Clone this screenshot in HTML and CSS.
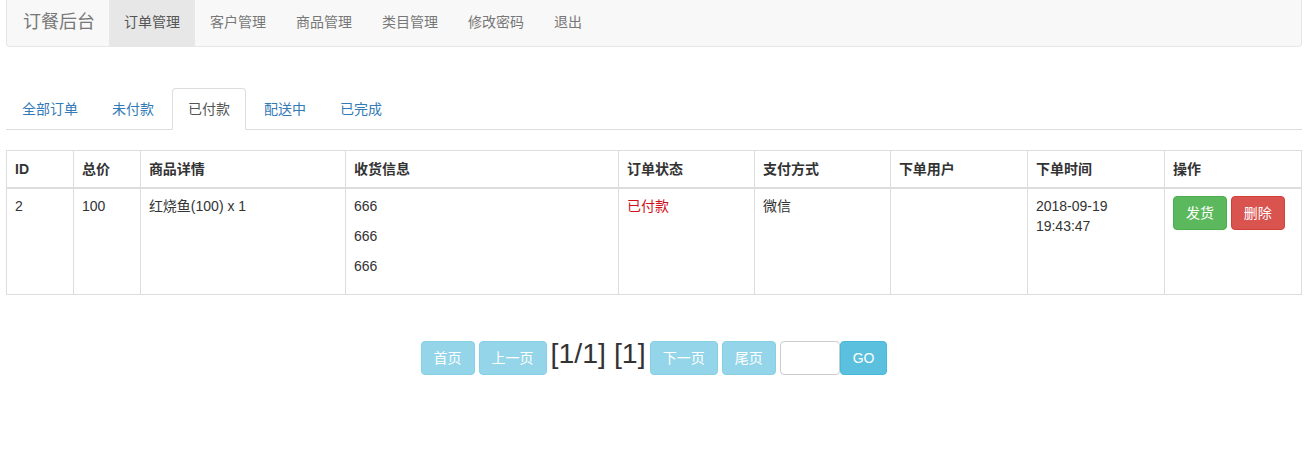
FILE: index.html
```html
<!DOCTYPE html>
<html lang="zh-CN">
<head>
    <meta charset="UTF-8">
    <meta name="viewport" content="width=device-width, initial-scale=1.0">
    <title>订餐后台</title>
    <link rel="stylesheet" href="styles.css">
</head>
<body>
    <nav class="navbar">
        <a class="navbar-brand" href="#">订餐后台</a>
        <ul class="navbar-nav">
            <li class="active"><a href="#">订单管理</a></li>
            <li><a href="#">客户管理</a></li>
            <li><a href="#">商品管理</a></li>
            <li><a href="#">类目管理</a></li>
            <li><a href="#">修改密码</a></li>
            <li><a href="#">退出</a></li>
        </ul>
    </nav>

    <ul class="nav-tabs">
        <li><a href="#">全部订单</a></li>
        <li><a href="#">未付款</a></li>
        <li class="active"><a href="#">已付款</a></li>
        <li><a href="#">配送中</a></li>
        <li><a href="#">已完成</a></li>
    </ul>

    <table class="order-table">
        <colgroup>
            <col class="col-sm">
            <col class="col-sm">
            <col class="col-md">
            <col class="col-lg">
            <col class="col-x">
            <col class="col-x">
            <col class="col-y">
            <col class="col-y">
            <col class="col-y">
        </colgroup>
        <thead>
            <tr>
                <th>ID</th>
                <th>总价</th>
                <th>商品详情</th>
                <th>收货信息</th>
                <th>订单状态</th>
                <th>支付方式</th>
                <th>下单用户</th>
                <th>下单时间</th>
                <th>操作</th>
            </tr>
        </thead>
        <tbody>
            <tr>
                <td>2</td>
                <td>100</td>
                <td>红烧鱼(100) x 1</td>
                <td>
                    <p>666</p>
                    <p>666</p>
                    <p>666</p>
                </td>
                <td class="status-paid">已付款</td>
                <td>微信</td>
                <td></td>
                <td>2018-09-19 19:43:47</td>
                <td class="actions">
                    <button class="btn btn-success">发货</button>
                    <button class="btn btn-danger">删除</button>
                </td>
            </tr>
        </tbody>
    </table>

    <div class="pager">
        <button class="btn btn-info" disabled>首页</button>
        <button class="btn btn-info" disabled>上一页</button>
        <span class="page-info">[1/1] [1]</span>
        <button class="btn btn-info" disabled>下一页</button>
        <button class="btn btn-info" disabled>尾页</button>
        <span class="jump">
            <input type="text" class="page-input">
            <button class="btn btn-info">GO</button>
        </span>
    </div>
</body>
</html>
```

FILE: styles.css
```css
/* page */
body {
    margin: 0;
    padding: 0 8px 0 6px;
    font-family: "Liberation Sans", "Noto Sans CJK SC", sans-serif;
    font-size: 14px;
    line-height: 20px;
    color: #333333;
    background-color: #FFFFFF;
}

a {
    text-decoration: none;
}

ul {
    list-style: none;
    margin: 0;
    padding: 0;
}

/* top navbar */
.navbar {
    display: flex;
    height: 46px;
    background-color: #F8F8F8;
    border: 1px solid #E7E7E7;
    border-top: none;
    border-radius: 0 0 4px 4px;
}

.navbar-brand {
    padding: 12px 14px 14px 16px;
    font-size: 18px;
    color: #777777;
}

.navbar-nav {
    display: flex;
}

.navbar-nav a {
    display: block;
    padding: 12px 15px 14px;
    color: #777777;
}

.navbar-nav .active a {
    background-color: #E7E7E7;
    color: #555555;
}

/* status tabs */
.nav-tabs {
    display: flex;
    margin-top: 41px;
    border-bottom: 1px solid #DDDDDD;
}

.nav-tabs li {
    margin-bottom: -1px;
    margin-right: 2px;
}

.nav-tabs a {
    display: block;
    padding: 10px 15px;
    border: 1px solid transparent;
    border-radius: 4px 4px 0 0;
    color: #337AB7;
}

.nav-tabs .active a {
    color: #555555;
    background-color: #FFFFFF;
    border-color: #DDDDDD #DDDDDD transparent;
}

/* order table */
.order-table {
    width: 100%;
    margin-top: 20px;
    border-collapse: collapse;
    border: 1px solid #DDDDDD;
}

.col-sm { width: 5.17%; }
.col-md { width: 15.83%; }
.col-lg { width: 21.08%; }
.col-x  { width: 10.5%; }
.col-y  { width: 10.58%; }

.order-table th,
.order-table td {
    padding: 8px;
    border: 1px solid #DDDDDD;
    text-align: left;
    vertical-align: top;
}

.order-table th {
    border-bottom-width: 2px;
    font-weight: bold;
}

.order-table td {
    padding-top: 7px;
}

.order-table p {
    margin: 0 0 10px;
}

.status-paid {
    color: #D0101B;
}

/* buttons */
.btn {
    display: inline-block;
    padding: 6px 12px;
    font-family: inherit;
    font-size: 14px;
    line-height: 20px;
    border: 1px solid transparent;
    border-radius: 4px;
    color: #FFFFFF;
    cursor: pointer;
}

.btn-success {
    background-color: #5CB85C;
    border-color: #4CAE4C;
}

.btn-danger {
    background-color: #D9534F;
    border-color: #D43F3A;
}

.btn-info {
    background-color: #5BC0DE;
    border-color: #46B8DA;
}

.btn:disabled {
    opacity: 0.65;
    cursor: not-allowed;
}

/* pagination */
.pager {
    display: flex;
    justify-content: center;
    align-items: baseline;
    gap: 4px;
    margin-top: 46px;
}

.page-info {
    font-size: 28.5px;
    color: #333333;
}

.jump {
    display: flex;
    align-items: baseline;
}

.page-input {
    width: 60px;
    height: 34px;
    box-sizing: border-box;
    padding: 6px 8px;
    border: 1px solid #CCCCCC;
    border-radius: 4px;
    font-family: inherit;
    font-size: 14px;
}
```
